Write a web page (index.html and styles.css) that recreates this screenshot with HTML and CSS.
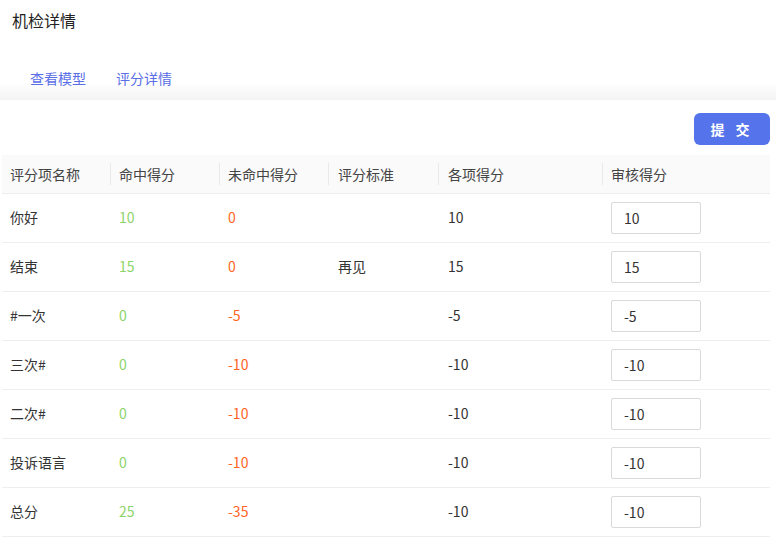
FILE: index.html
```html
<!DOCTYPE html>
<html lang="zh">
<head>
<meta charset="utf-8">
<title>机检详情</title>
<link rel="stylesheet" href="styles.css">
</head>
<body>
<div class="title">机检详情</div>
<div class="tabs">
  <span class="tab">查看模型</span>
  <span class="tab">评分详情</span>
</div>
<div class="toolbar">
  <button class="submit">提 交</button>
</div>
<table class="grid">
  <colgroup>
    <col style="width:108px"><col style="width:109px"><col style="width:109px"><col style="width:110px"><col style="width:164px"><col style="width:168px">
  </colgroup>
  <thead>
    <tr><th>评分项名称</th><th>命中得分</th><th>未命中得分</th><th>评分标准</th><th>各项得分</th><th>审核得分</th></tr>
  </thead>
  <tbody>
    <tr><td>你好</td><td class="hit">10</td><td class="miss">0</td><td></td><td>10</td><td><input class="score" value="10"></td></tr>
    <tr><td>结束</td><td class="hit">15</td><td class="miss">0</td><td>再见</td><td>15</td><td><input class="score" value="15"></td></tr>
    <tr><td>#一次</td><td class="hit">0</td><td class="miss">-5</td><td></td><td>-5</td><td><input class="score" value="-5"></td></tr>
    <tr><td>三次#</td><td class="hit">0</td><td class="miss">-10</td><td></td><td>-10</td><td><input class="score" value="-10"></td></tr>
    <tr><td>二次#</td><td class="hit">0</td><td class="miss">-10</td><td></td><td>-10</td><td><input class="score" value="-10"></td></tr>
    <tr><td>投诉语言</td><td class="hit">0</td><td class="miss">-10</td><td></td><td>-10</td><td><input class="score" value="-10"></td></tr>
    <tr><td>总分</td><td class="hit">25</td><td class="miss">-35</td><td></td><td>-10</td><td><input class="score" value="-10"></td></tr>
  </tbody>
</table>
</body>
</html>
```
FILE: styles.css
```css
html, body {
  margin: 0;
  padding: 0;
  background: #fff;
  font-family: "Noto Sans CJK SC", "Microsoft YaHei", sans-serif;
  color: #333;
  font-size: 14px;
}
.title {
  height: 40px;
  line-height: 40px;
  padding-left: 12px;
  font-size: 16px;
  color: #222;
}
.tabs {
  height: 60px;
  display: flex;
  align-items: flex-start;
  padding: 0 0 0 30px;
  gap: 30px;
  background: linear-gradient(to bottom, #fff 0, #fff 42px, #f3f3f3 60px);
}
.tab {
  margin-top: 28px;
  line-height: 20px;
  color: #5a6ee6;
  font-size: 14px;
}
.toolbar {
  display: flex;
  justify-content: flex-end;
  padding: 13px 6px 10px 0;
}
.submit {
  width: 76px;
  height: 32px;
  border: none;
  border-radius: 6px;
  background: #5573ea;
  color: #fff;
  font-family: inherit;
  font-size: 14px;
  font-weight: bold;
  letter-spacing: 4px;
  padding: 0;
}
.grid {
  margin-left: 2px;
  width: 768px;
  border-collapse: collapse;
  table-layout: fixed;
}
.grid th {
  position: relative;
  height: 38px;
  padding: 0 8px 0 9px;
  background: #fafafa;
  text-align: left;
  font-weight: normal;
  color: #444;
  border-bottom: 1px solid #eeeeee;
}
.grid th + th::before {
  content: "";
  position: absolute;
  left: 0;
  top: 8px;
  height: 22px;
  width: 1px;
  background: #e9e9e9;
}
.grid td {
  height: 46px;
  padding: 0 8px 2px 9px;
  border-bottom: 1px solid #eeeeee;
  color: #333;
}
.grid th:first-child, .grid td:first-child { padding-left: 8px; }
.grid th:nth-child(4), .grid td:nth-child(4),
.grid th:nth-child(5), .grid td:nth-child(5) { padding-left: 10px; }
.grid td.hit { color: #8cd46a; }
.grid td.miss { color: #ff6424; }
.score {
  box-sizing: border-box;
  width: 90px;
  height: 32px;
  margin: 2px 0 0 0;
  border: 1px solid #d9d9d9;
  border-radius: 2px;
  padding: 0 0 0 12px;
  font-family: inherit;
  font-size: 14px;
  color: #333;
  outline: none;
}
```
